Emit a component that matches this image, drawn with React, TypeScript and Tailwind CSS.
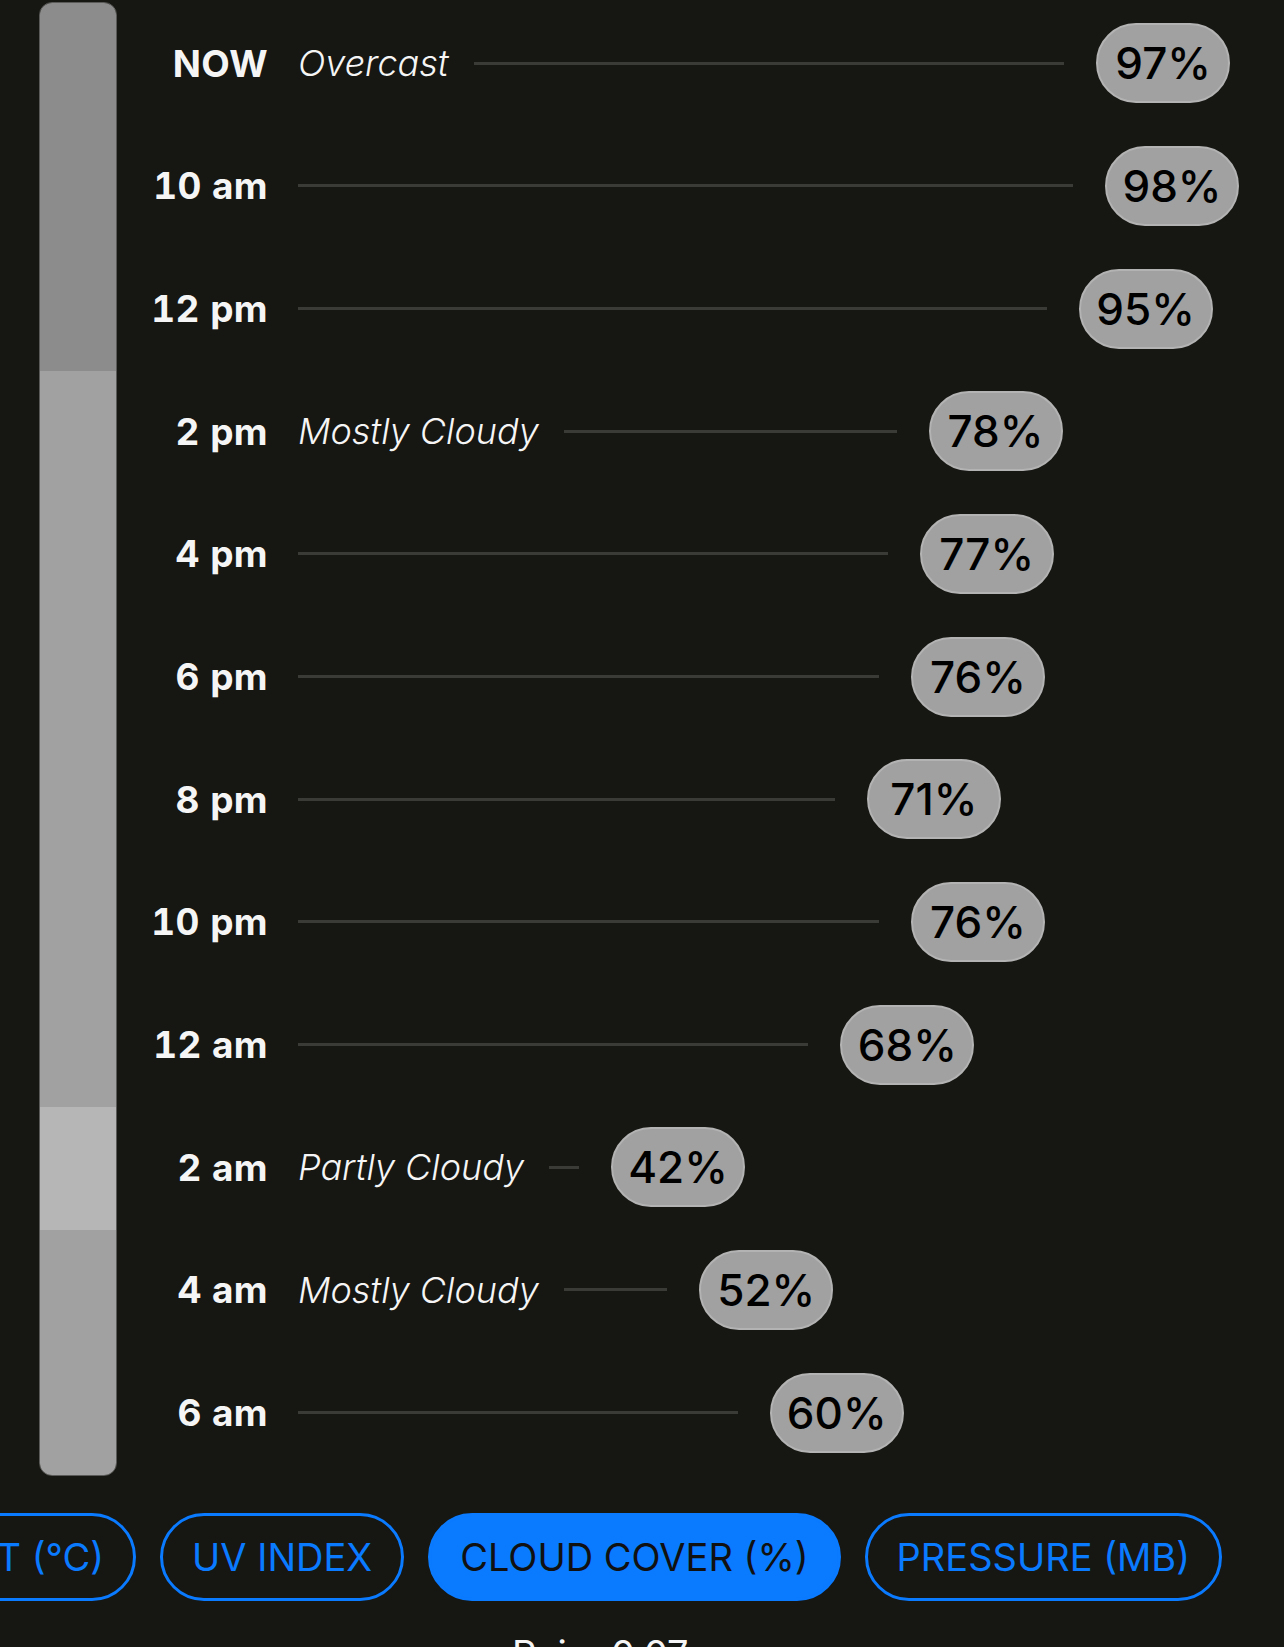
import React from 'react';

type Row = { time: string; cond?: string; value: number; tone: 'dark' | 'mid' | 'light' };

const rows: Row[] = [
  { time: 'NOW', cond: 'Overcast', value: 97, tone: 'dark' },
  { time: '10 am', value: 98, tone: 'dark' },
  { time: '12 pm', value: 95, tone: 'dark' },
  { time: '2 pm', cond: 'Mostly Cloudy', value: 78, tone: 'mid' },
  { time: '4 pm', value: 77, tone: 'mid' },
  { time: '6 pm', value: 76, tone: 'mid' },
  { time: '8 pm', value: 71, tone: 'mid' },
  { time: '10 pm', value: 76, tone: 'mid' },
  { time: '12 am', value: 68, tone: 'mid' },
  { time: '2 am', cond: 'Partly Cloudy', value: 42, tone: 'light' },
  { time: '4 am', cond: 'Mostly Cloudy', value: 52, tone: 'mid' },
  { time: '6 am', value: 60, tone: 'mid' },
];

const toneClass = {
  dark: 'bg-[#8c8c8c]',
  mid: 'bg-[#a1a1a1]',
  light: 'bg-[#b6b6b6]',
};

const tabs = ['UV INDEX', 'CLOUD COVER (%)', 'PRESSURE (MB)'];

// pill x from the value: 42% sits at 611px, 98% at 1105px
const minV = 42;
const maxV = 98;
const trackFor = (v: number) => 313 + ((v - minV) / (maxV - minV)) * 494;

export default function App() {
  return (
    <div
      className="min-h-screen w-full overflow-hidden bg-[#161612] text-[#f5f5f5]"
      style={{ fontFamily: 'Inter, "Noto Sans", sans-serif' }}
    >
      <div className="flex pt-[2px]">
        <div className="ml-[39px] w-[78px] shrink-0 flex flex-col overflow-hidden rounded-[13px] border border-[#5a5a58]">
          {rows.map((r, i) => (
            <div key={i} className={`h-[122.67px] ${toneClass[r.tone]}`} />
          ))}
        </div>

        <div className="flex flex-col">
          {rows.map((r, i) => (
            <div key={i} className="flex h-[122.67px] items-center">
              <div className="w-[151px] shrink-0 text-right text-[37px] font-bold leading-none tabular-nums tracking-[0.01em]">
                {r.time}
              </div>
              <div className="ml-[30px] flex items-center" style={{ width: trackFor(r.value) }}>
                {r.cond && (
                  <span className="mr-[25px] shrink-0 text-[36px] font-light italic leading-none">{r.cond}</span>
                )}
                <div className="mr-[32px] h-[3px] flex-1 bg-[#3a3a37]" />
              </div>
              <div className="flex h-[80px] w-[134px] shrink-0 items-center justify-center rounded-full border-2 border-[#b3b3b3] bg-[#a1a1a1] text-[44px] font-medium leading-none text-black">
                {r.value}%
              </div>
            </div>
          ))}
        </div>
      </div>

      <div className="mt-[37px] flex gap-[24px]">
        <div className="flex w-[136px] shrink-0 justify-end">
          <button className="h-[88px] shrink-0 whitespace-nowrap rounded-full border-[3px] border-[#0a7aff] px-[29px] text-[38px] leading-none text-[#0a7aff]">
            DEW POINT (°C)
          </button>
        </div>
        {tabs.map((t) => (
          <button
            key={t}
            className={`h-[88px] shrink-0 whitespace-nowrap rounded-full border-[3px] border-[#0a7aff] px-[29px] text-[38px] leading-none ${
              t === 'CLOUD COVER (%)' ? 'bg-[#0a7aff] text-[#111]' : 'text-[#0a7aff]'
            }`}
          >
            {t}
          </button>
        ))}
      </div>

      <div className="mt-[34px] pl-[512px] text-[38px] leading-none">Rain: 0.07</div>
    </div>
  );
}
